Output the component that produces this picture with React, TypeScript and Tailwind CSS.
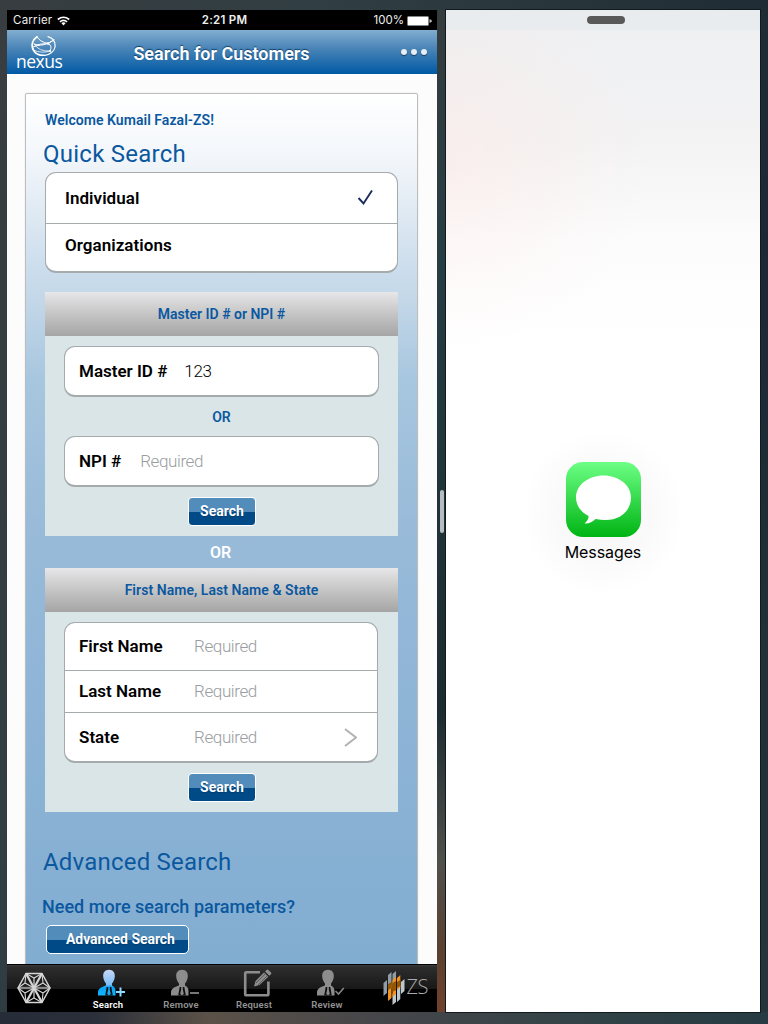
import type { ReactNode } from "react";

function Wifi() {
  return (
    <svg width="13" height="10" viewBox="0 0 13 10" fill="none" stroke="#fff" strokeWidth="1.6">
      <path d="M.8 3.5Q6.5-1 12.2 3.5M2.9 5.8Q6.5 2.9 10.1 5.8" />
      <path d="M4.3 7.1Q6.5 5.6 8.7 7.1L6.5 9.6Z" fill="#fff" stroke="none" />
    </svg>
  );
}

function NexusMark() {
  return (
    <svg className="ml-[14px] block" width="28" height="20" viewBox="0 0 28 20" fill="none" stroke="#fff" strokeLinecap="round">
      <path d="M7 .8C2.500 4 1 9 3.200 13.500C5 18 10 19.500 14 19.500" strokeWidth="1.800" />
      <path d="M18 .6C23 2 25.500 6 25 11C24.500 15 20 19 14 19.500" strokeWidth="1.200" />
      <path d="M7 .8Q10 6 18 7.500L24 4M4 8Q12 12 24 4M3 11Q10 7 18 7.500Q23 10 20 15" strokeWidth="1" />
      <path d="M3 14Q12 18 20 15M4 8Q9 16 20 15" strokeWidth=".8" />
      <circle cx="8.500" cy="9" r="1.100" fill="#fff" stroke="none" />
      <circle cx="18" cy="7.500" r="1.300" fill="#fff" stroke="none" />
      <circle cx="20" cy="15" r="1" fill="#fff" stroke="none" />
    </svg>
  );
}

function Snowflake() {
  return (
    <svg width="34" height="32" viewBox="0 0 34 32" fill="none" stroke="#d6d6d6" strokeWidth="1.500" strokeLinejoin="round">
      <path d="M9 1.500H25L33 16L25 30.500H9L1 16Z" />
      <path d="M1 16H33" stroke="#888" strokeWidth="2.400" />
      <path d="M9 1.500L25 30.500M25 1.500L9 30.500" strokeWidth="2.200" />
      <path d="M17 16V6M17 16V26M17 16L8 11M17 16L26 21M17 16L26 11M17 16L8 21" strokeWidth="1.200" />
      <path d="M9 1.500L17 6L25 1.500L26 11L33 16L26 21L25 30.500L17 26L9 30.500L8 21L1 16L8 11Z" strokeWidth="1.100" />
    </svg>
  );
}

function Person({ kind }: { kind: "add" | "remove" | "check" }) {
  const on = kind === "add";
  const fill = on ? "url(#personBlue)" : "#8d8d8d";
  return (
    <svg className="block overflow-visible" width="30" height="28" viewBox="0 0 30 28">
      <defs>
        <linearGradient id="personBlue" x1="0" y1="0" x2="0" y2="28" gradientUnits="userSpaceOnUse">
          <stop offset="0" stopColor="#cbd8f5" />
          <stop offset=".55" stopColor="#7dbff7" />
          <stop offset=".65" stopColor="#08a3f6" />
          <stop offset="1" stopColor="#18b8ff" />
        </linearGradient>
      </defs>
      <path d="M12 .8C8 .8 5.900 3.600 6.200 7.500C6.400 10.500 7.700 13 9 14.500V16.500C4.500 18 1 19.500 1 23.500V26.500H18.500V22Q18.500 18.200 15 16.500V14.500C16.300 13 17.600 10.500 17.800 7.500C18.100 3.600 16 .8 12 .8Z" fill={fill} />
      <path d="M9.700 18H14.300L15.800 26.500H8.200Z" fill="#101010" />
      <path d="M10.900 18.300H13.100L12.700 20L13.800 25L12 26.300L10.200 25L11.300 20Z" fill={fill} />
      {kind === "add" && <path d="M23.500 18.500V27.500M19 23H28" stroke="#8edaff" strokeWidth="2" />}
      {kind === "remove" && <path d="M20 24H29" stroke="#858585" strokeWidth="1.800" />}
      {kind === "check" && <path d="M19.500 22L22.500 25L27.800 19" stroke="#858585" strokeWidth="1.600" fill="none" />}
    </svg>
  );
}

function Compose() {
  return (
    <svg className="block" width="30" height="28" viewBox="0 0 30 28">
      <path d="M17 3.200H3.500Q2.200 3.200 2.200 4.500V25Q2.200 26.300 3.500 26.300H24Q25.400 26.300 25.400 25V12.500" fill="none" stroke="#8d8d8d" strokeWidth="2.600" />
      <path d="M11 17.500L12.500 12L21 3.500L25.300 7.700L16.500 16ZM22 2.500L23.500 1Q24.500 0 25.500 1L28 3.400Q28.800 4.200 28 5.200L26.300 6.800Z" fill="#8d8d8d" />
      <path d="M13 14L22 5.200M15 16L24 7" stroke="#222" strokeWidth=".5" />
    </svg>
  );
}

function ZsMark() {
  return (
    <svg className="block shrink-0" width="22" height="35" viewBox="0 0 22 35">
      <path d="M0.500 13L4 10V23L.5 26ZM5 5L8.500 2V17L5 20ZM9.500 4L13 1V11L9.500 14Z" fill="#8e9ca5" />
      <path d="M14 18L17.300 15V29L14 32ZM18 12L21.500 9V21L18 24ZM9.500 24L13 21V32L9.500 35Z" fill="#bdc7cc" />
      <path d="M5 18L8.500 15V28L5 31ZM9.500 10L13 7V24L9.500 27ZM14 8L17.300 5V17L14 20Z" fill="#f39220" />
      <path d="M5 14L8.500 12V18L5 20ZM9.500 13L13 11V20L9.500 22ZM14 12L17.300 10V16L14 18Z" fill="#975600" />
    </svg>
  );
}

function SearchButton() {
  return (
    <button className="flex h-[29px] w-[68px] items-center justify-center rounded-[4px] border border-white bg-[linear-gradient(#528cbb_0,#528cbb_50%,#004b87_51%)] pb-[2px] text-[14px] font-bold leading-none text-white [text-shadow:0_1px_1px_#003b70]">
      Search
    </button>
  );
}

function Group({ children, className }: { children: ReactNode; className: string }) {
  return (
    <div className={"overflow-hidden rounded-[11px] border border-b-2 border-[#a5aaad] bg-white text-[17px] text-black " + className}>
      {children}
    </div>
  );
}

const sectionHeader =
  "flex h-[44px] items-center justify-center bg-[linear-gradient(#e7e7e9,#d2d2d3_30%,#a5a5a6)] text-[14px] font-semibold text-[#0b589f]";
const value = "font-light tracking-[-.4px] text-[#999da0]";
const row = "flex items-center pl-[14px] font-semibold";

function Tab({ label, icon, active = false }: { label: string; icon: ReactNode; active?: boolean }) {
  return (
    <div className={"flex w-[60px] flex-col items-center pt-[4px] font-['Roboto'] text-[9.5px] font-semibold leading-[14px] tracking-[.15px] " + (active ? "text-white" : "text-[#929292]")}>
      <div className="pl-[7px]">{icon}</div>
      <span className="mt-[1px]">{label}</span>
    </div>
  );
}

function CustomerApp() {
  return (
    <section className="flex h-[1002px] w-[430px] shrink-0 flex-col overflow-hidden bg-[#fcfcfc]">
      <div className="grid h-[20px] shrink-0 grid-cols-3 items-center bg-black pl-[6px] pr-[5px] font-['Inter'] text-[11.5px] leading-none text-[#eee]">
        <div className="flex items-center gap-[5px] pt-[1px] tracking-[.25px]">Carrier <Wifi /></div>
        <div className="pl-[4px] pt-[1px] text-center font-semibold tracking-[.25px]">2:21 PM</div>
        <div className="flex items-center justify-end gap-[3px] pt-[1px]">
          100%
          <svg width="25" height="10" viewBox="0 0 25 10">
            <rect x=".5" y=".5" width="21" height="9" rx="1" fill="#fff" stroke="#858585" />
            <path d="M22.500 3Q25 4 25 5T22.500 7Z" fill="#bbb" />
          </svg>
        </div>
      </div>
      <header className="flex h-[44px] shrink-0 justify-between bg-[linear-gradient(#82aed1,#4c86b8_40%,#0059a5)]">
        <div className="w-[64px] pl-[9px] pt-[6px]">
          <NexusMark />
          <div className="-mt-[3px] font-['Open_Sans'] text-[17.5px] leading-[17px] tracking-[-.5px] text-white">nexus</div>
        </div>
        <h1 className="pr-[1px] pt-[1px] text-[18px] font-semibold leading-[46px] text-white [text-shadow:0_-1px_1px_#123f67]">Search for Customers</h1>
        <div className="flex w-[64px] items-center justify-end gap-[4px] pr-[10px]">
          <i className="size-[6px] rounded-full bg-[#e9edf1] shadow-[0_1px_1px_#153c60]" />
          <i className="size-[6px] rounded-full bg-[#e9edf1] shadow-[0_1px_1px_#153c60]" />
          <i className="size-[6px] rounded-full bg-[#e9edf1] shadow-[0_1px_1px_#153c60]" />
        </div>
      </header>

      <main className="min-h-0 flex-1 overflow-hidden pl-[18px] pr-[19px] pt-[19px]">
        <div className="h-[900px] rounded-t-[2px] border border-[#bdbdbd] bg-[linear-gradient(#fff_0,#f3f7fb_60px,#ebf1f7_86px,#cddeed_170px,#c3d7e8_207px,#a7c6df_285px,#99bbd9_430px,#91b6d7_560px,#81add1_870px)] px-[19px] pt-[16px] text-[#0b589f] shadow-[0_0_1px_#bbb]">
          <p className="h-[21px] text-[14px] font-semibold leading-[21px] tracking-[.05px]">Welcome Kumail Fazal-ZS!</p>
          <h2 className="-ml-[2px] mt-[8px] h-[33px] text-[24px] leading-[30px] tracking-[.25px]">Quick Search</h2>
          <Group className="h-[101px]">
            <div className="flex h-[50px] items-center justify-between px-[19px] pt-[1px] font-semibold tracking-[.05px]">
              Individual
              <svg className="mb-[2px] mr-[4px]" width="17" height="17" viewBox="0 0 17 17"><path d="M1.500 9L6.500 14.500L15 1.500" stroke="#192c5b" strokeWidth="1.900" fill="none" /></svg>
            </div>
            <div className="h-[48px] border-t border-[#a5aaad] px-[19px] font-semibold leading-[43px] tracking-[.05px]">Organizations</div>
          </Group>

          <h3 className={"mt-[19px] " + sectionHeader}>Master ID # or NPI #</h3>
          <div className="flex h-[200px] flex-col items-center bg-[#d9e5e6] pt-[10px]">
            <Group className="flex h-[51px] w-[315px] items-center pl-[14px] pt-[2px] font-semibold">
              Master ID # <span className="ml-[17px] font-light tracking-[-.3px]">123</span>
            </Group>
            <div className="h-[39px] text-[14px] font-semibold leading-[40px]">OR</div>
            <Group className="flex h-[51px] w-[315px] items-center pl-[14px] pt-[2px] font-semibold">
              NPI # <span className={"ml-[19px] " + value}>Required</span>
            </Group>
            <div className="pl-[1px] pt-[10px]"><SearchButton /></div>
          </div>
          <div className="h-[32px] pr-[2px] pt-[1px] text-center text-[16px] font-semibold leading-[32px] text-white">OR</div>
          <h3 className={"tracking-[.05px] " + sectionHeader}>First Name, Last Name &amp; State</h3>
          <div className="flex h-[200px] flex-col items-center bg-[#d9e5e6] pr-[1px] pt-[10px]">
            <Group className="h-[141px] w-[314px]">
              <div className={"h-[47px] pt-[1px] " + row}><span className="w-[115px]">First Name</span><span className={value}>Required</span></div>
              <div className={"h-[42px] border-t border-[#a5aaad] " + row}><span className="w-[115px]">Last Name</span><span className={value}>Required</span></div>
              <div className={"h-[49px] border-t border-[#a5aaad] pt-[1px] " + row}>
                <span className="w-[115px]">State</span><span className={value}>Required</span>
                <svg className="mb-[1px] ml-auto mr-[20px]" width="13" height="19" viewBox="0 0 13 19"><path d="M1 1L12 9.500L1 18" stroke="#b0b2b3" strokeWidth="2" fill="none" /></svg>
              </div>
            </Group>
            <div className="pl-[2px] pt-[10px]"><SearchButton /></div>
          </div>
          <h2 className="-ml-[2px] mt-[32px] text-[24px] leading-[36px] tracking-[.2px]">Advanced Search</h2>
          <p className="-ml-[3px] mt-[14px] text-[18px] font-medium leading-[26px] tracking-[.02px]">Need more search parameters?</p>
          <button className="ml-[1px] mt-[5px] flex h-[29px] w-[143px] items-center rounded-[5px] border border-white bg-[linear-gradient(#528cbb_0,#528cbb_50%,#004b87_51%)] pb-[2px] pl-[19px] text-[14px] font-bold leading-none tracking-[-.05px] text-white [text-shadow:0_1px_1px_#003b70]">Advanced Search</button>
        </div>
      </main>

      <nav className="flex h-[48px] shrink-0 border-t border-black bg-[linear-gradient(#3b3b3b_0,#2d2d2d_2px,#181818_51%,#000_52%)]">
        <div className="w-[71px] pl-[10px] pt-[7px]"><Snowflake /></div>
        <div className="flex gap-[13px]">
          <Tab active label="Search" icon={<Person kind="add" />} />
          <Tab label="Remove" icon={<Person kind="remove" />} />
          <Tab label="Request" icon={<Compose />} />
          <Tab label="Review" icon={<Person kind="check" />} />
        </div>
        <div className="ml-auto flex items-center gap-[2px] pb-[3px] pr-[9px] font-['Open_Sans'] text-[20px] font-light tracking-[-.5px] text-[#aaa]"><ZsMark />ZS</div>
      </nav>
    </section>
  );
}

function MessagesPanel() {
  return (
    <section className="h-[1002px] w-[314px] shrink-0 bg-white outline outline-1 outline-[#111b1e]">
      <div className="flex h-[20px] justify-center bg-[#e8ecef] pl-[6px] pt-[6px]"><div className="h-[8px] w-[38px] rounded-full bg-[#595959]" /></div>
      <div className="h-[982px] bg-[radial-gradient(ellipse_200px_190px_at_0_130px,#ffe4df66_0,transparent_100%),linear-gradient(#eff0f2_0,#f3f3f4_110px,#fcfcfd_210px,#fff_310px)] pt-[392px]">
        <div className="mx-auto flex w-[150px] flex-col items-center bg-[radial-gradient(circle_at_center,#f5f5f5_0,#fafafa_42%,transparent_70%)] pb-[40px] pt-[40px]">
          <svg width="75" height="75" viewBox="0 0 75 75">
            <defs><linearGradient id="messageGreen" x1="0" y1="0" x2="0" y2="1"><stop stopColor="#6cff85" /><stop offset="1" stopColor="#00b414" /></linearGradient></defs>
            <rect width="75" height="75" rx="17" fill="url(#messageGreen)" />
            <path d="M37.500 13.500C22.500 13.500 10 23 10 35.500C10 43 14.500 50 22.500 54C23 57 20 60 18.500 61.500C22 62 27 60 29.500 57C53 62 65 49 65 35.500C65 23 52.500 13.500 37.500 13.500Z" fill="white" />
          </svg>
          <span className="mt-[3px] font-['Inter'] text-[16px] leading-[24px] tracking-[-.1px] text-black">Messages</span>
        </div>
      </div>
    </section>
  );
}

export default function App() {
  return (
    <div className="flex h-[1024px] w-[768px] overflow-hidden bg-[linear-gradient(90deg,#262c38_0,#2a2f3a_12%,#5b5148_27%,#45464a_50%,#334347_75%,#263b43)] bg-[length:100%_12px] bg-bottom bg-no-repeat">
      <div className="flex h-[1012px] w-[768px] bg-[linear-gradient(110deg,#383d40_0,#303e43_30%,#253238_55%,#1c2834_75%,#24363c)] pl-[7px] pt-[10px] font-['Roboto',sans-serif]">
        <CustomerApp />
        <div className="flex h-[1002px] w-[9px] shrink-0 items-center justify-center bg-[linear-gradient(#353c3e,#263d43_25%,#1c2b30_70%,#50504b_85%,#5c402f_94%,#71422e)]">
          <div className="h-[43px] w-[4px] rounded-full bg-[#b5bdc0]" />
        </div>
        <MessagesPanel />
      </div>
    </div>
  );
}
